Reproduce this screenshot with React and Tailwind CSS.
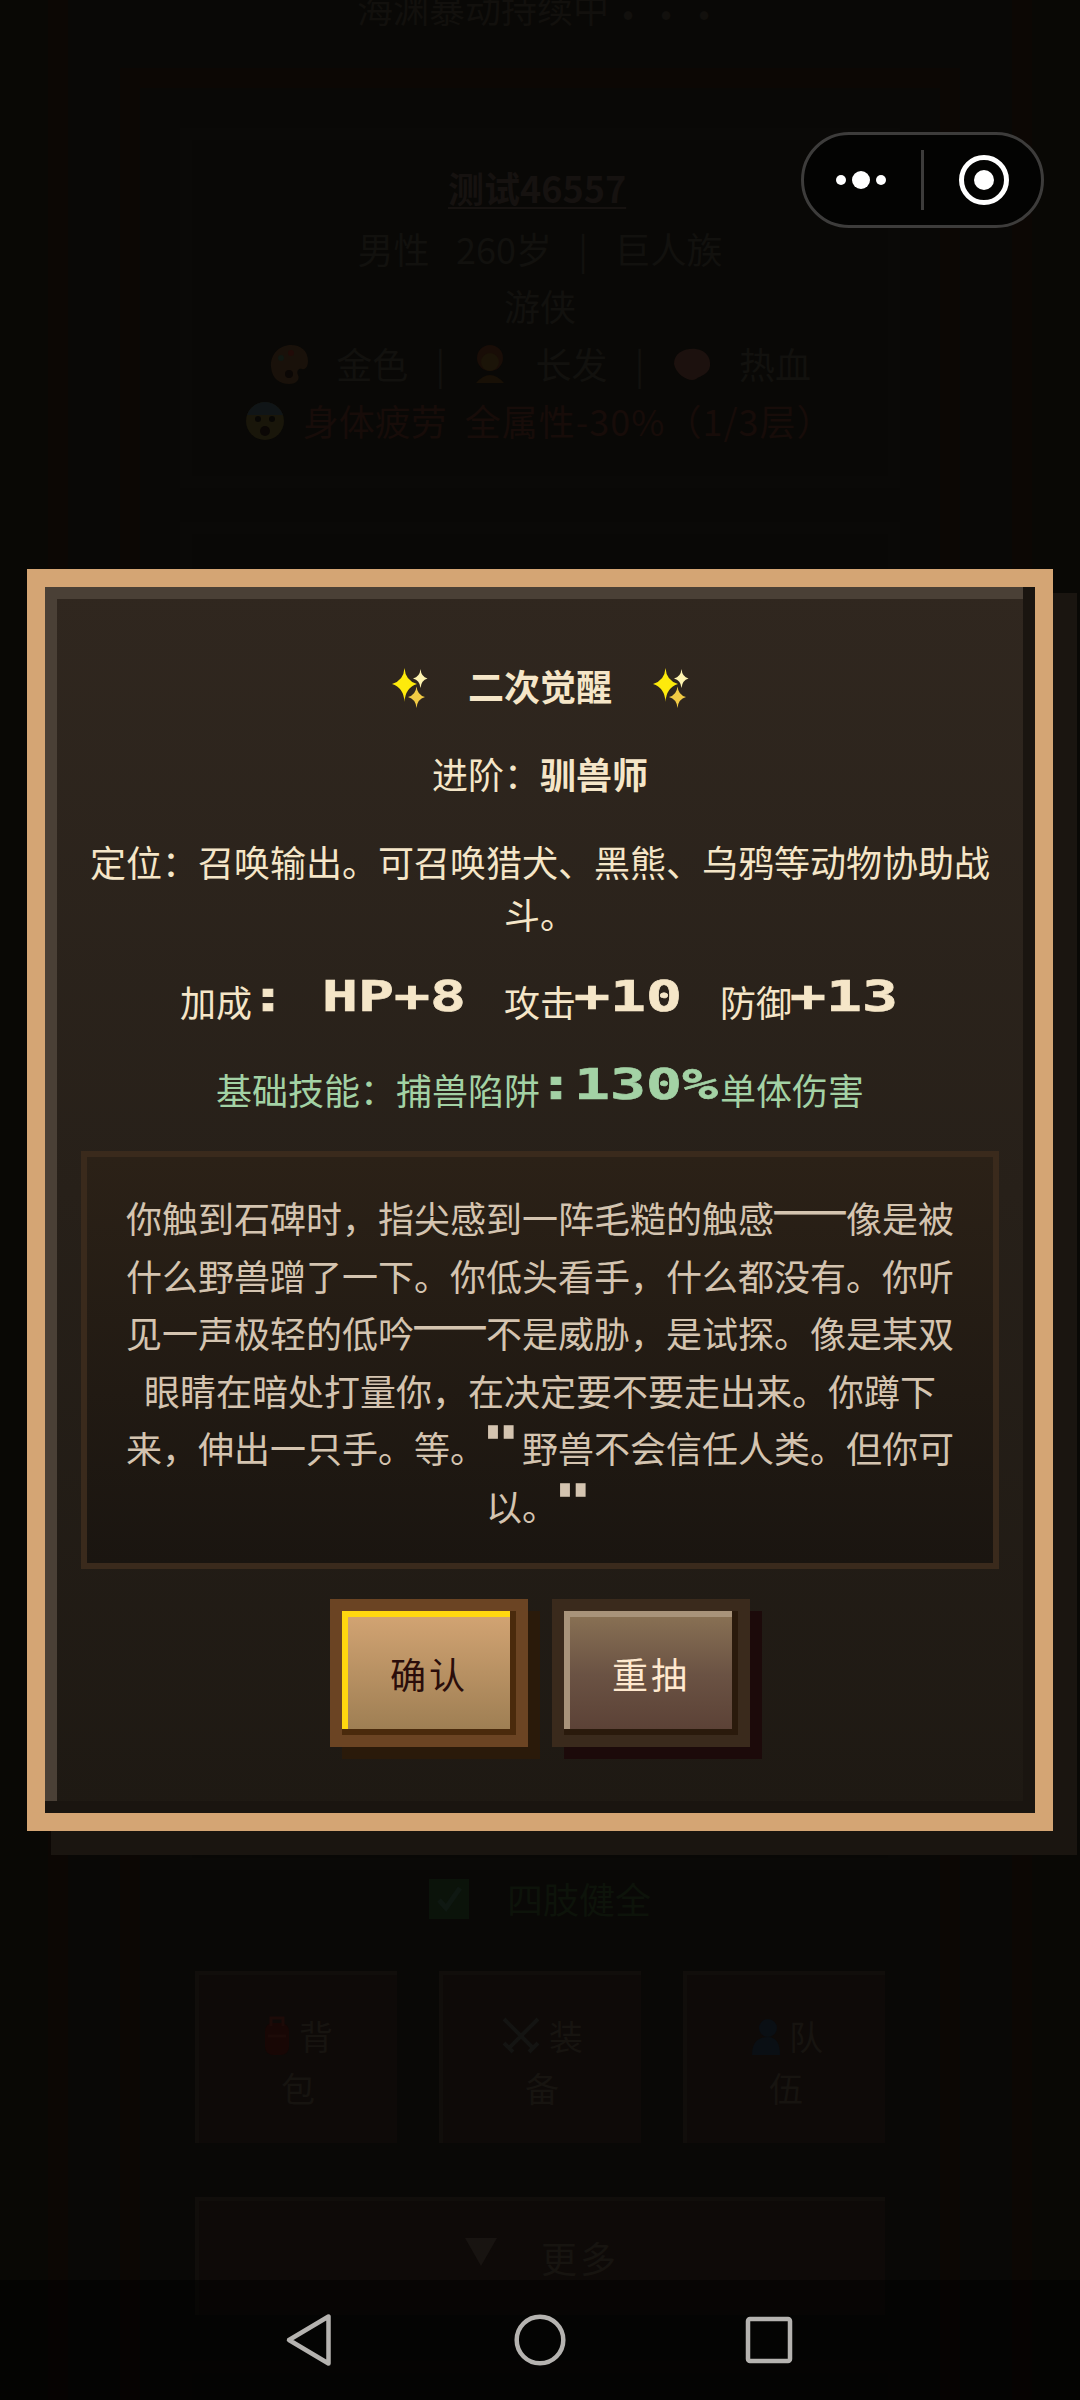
import React from "react";

function Sparkle() {
  return (
    <svg className="block h-[42px] w-[42px] overflow-visible" viewBox="0 0 42 42">
      <path d="M14.500 4Q15.300 16.500 27 20Q15.300 23.500 14.500 38Q13.700 23.500 2 20Q13.700 16.500 14.500 4Z" fill="#fdea0c" />
      <circle cx="14.500" cy="20" r="4.800" fill="#fdea0c" />
      <path d="M30.500 5Q31.200 12.800 37.500 14.500Q31.200 16.200 30.500 24Q29.800 16.200 23 14.500Q29.800 12.800 30.500 5Z" fill="#fdf3b0" />
      <circle cx="30.500" cy="14.500" r="2.300" fill="#fdf3b0" />
      <path d="M26.500 22.500Q27.300 31 35 33Q27.300 35 26.500 44Q25.700 35 18 33Q25.700 31 26.500 22.500Z" fill="#f2cb45" />
      <circle cx="26.500" cy="33" r="3" fill="#f2cb45" />
    </svg>
  );
}

function Pixel({ children, cells }) {
  return (
    <span className="relative -top-[6px] inline-block h-[52px] text-left align-top leading-[52px]" style={{ width: cells * 36 }}>
      <span className="-ml-[2px] inline-block origin-left scale-x-[1.424] font-['DejaVu_Sans_Mono','Liberation_Mono',monospace] text-[42px] leading-[52px] font-bold whitespace-pre [-webkit-text-stroke:0.6px_currentColor]">
        {children}
      </span>
    </span>
  );
}

function Quote() {
  return (
    <span className="relative -top-[2px] inline-block h-[52px] w-9 text-left align-top leading-[52px]">
      <span className="-ml-[4px] inline-block origin-left scale-x-[1.424] font-['DejaVu_Sans_Mono','Liberation_Mono',monospace] text-[44px] leading-[52px] font-bold [-webkit-text-stroke:1.4px_currentColor]">"</span>
    </span>
  );
}

function Dash() {
  return <span className="relative -top-[10px] inline-block w-[72px] scale-x-[1.24] font-bold">——</span>;
}

function Line({ children }) {
  return <span className="block h-[57.6px]">{children}</span>;
}

function Tile({ icon, a, b }) {
  return (
    <div className="flex h-[172px] w-[202px] flex-col items-center border-t-[4px] border-l-[4px] border-[#110e0b] bg-[#0e0a08] pt-[35px] text-[34px] leading-[52px] text-[#171410]">
      <div className="flex items-center gap-2">{icon}<span>{a}</span></div>
      <div>{b}</div>
    </div>
  );
}

function Backdrop() {
  return (
    <div className="flex h-[2400px] w-[1080px] flex-col overflow-hidden bg-[#090805]">
      <div className="mx-[48px] flex h-[2400px] flex-col items-center border-x-[20px] border-[#0c0704] bg-[#090806]">
        <div className="-mt-[22px] flex h-[90px] shrink-0 pl-3 text-[36px] leading-[58px] text-[#12100d]">
          海渊暴动持续中<span className="relative -top-[5px] pl-3 text-[40px] font-black tracking-[24px]">...</span>
        </div>
        <div className="flex h-[2340px] w-[840px] shrink-0 flex-col items-center border-[20px] border-b-0 border-[#0c0704] bg-[#090806] pt-[40px] text-[36px] leading-[57.6px] text-[#12110e]">
          <div className="flex h-[360px] w-[720px] shrink-0 flex-col items-center border-[12px] border-[#0a0907] pt-[19px]">
            <div className="w-[184px] font-bold whitespace-nowrap text-[#161210] underline decoration-2 underline-offset-4">测试46557</div>
            <div className="mt-[3px] flex w-[365px] justify-between"><span>男性</span><span>260岁</span><span>|</span><span>巨人族</span></div>
            <div>游侠</div>
            <div className="flex w-[542px] items-center justify-between">
              <svg className="h-10 w-10" viewBox="0 0 40 40"><path d="M22 1C10 1 1 11 2 23s9 17 18 17c8 0 11-5 9-9s1-7 4-6 6-2 6-8C39 7 32 1 22 1Z" fill="#19110a" /><circle cx="12" cy="14" r="3" fill="#101812" /><circle cx="22" cy="9" r="3" fill="#210b08" /><circle cx="20" cy="30" r="4" fill="#0b0705" /></svg>
              <span>金色</span><span>|</span>
              <svg className="h-10 w-9" viewBox="0 0 36 40"><circle cx="18" cy="14" r="13" fill="#190d07" /><circle cx="18" cy="18" r="9" fill="#1b1408" /><path d="M4 39q14-16 28 0Z" fill="#181006" /></svg>
              <span>长发</span><span>|</span>
              <svg className="h-10 w-10" viewBox="0 0 40 40"><path d="M2 20C2 8 14 4 24 5s15 9 14 17-8 9-14 13-20-4-22-15Z" fill="#1c110e" /></svg>
              <span>热血</span>
            </div>
            <div className="ml-[-2px] flex w-[589px] items-center justify-between whitespace-nowrap text-[#170c09]">
              <svg className="h-10 w-10" viewBox="0 0 40 40"><circle cx="20" cy="20" r="19" fill="#19160a" /><path d="M2 14a19 19 0 0 1 36 0Z" fill="#101517" /><circle cx="13" cy="18" r="3" fill="#080705" /><circle cx="27" cy="18" r="3" fill="#080705" /><ellipse cx="20" cy="30" rx="5" ry="5" fill="#0b0705" /></svg>
              <span>身体疲劳</span><span className="tracking-[1px]">全属性-30%（1/3层）</span>
            </div>
          </div>
          <div className="mt-[34px] h-[1348px] w-[720px] shrink-0 border-[12px] border-[#0a0907]" />
          <div className="flex h-[75px] w-[720px] shrink-0 items-start justify-center gap-[38px] text-[#0d130a]">
            <svg className="mt-[9px] h-10 w-10" viewBox="0 0 40 40"><rect width="40" height="40" fill="#0b130a" /><path d="m10 21 7 8L31 9" fill="none" stroke="#0f1812" strokeWidth="5" /></svg>
            <span>四肢健全</span>
          </div>
          <div className="flex h-[252px] w-[690px] shrink-0 justify-between pt-[26px]">
            <Tile a="背" b="包" icon={<svg className="h-10 w-7" viewBox="0 0 28 40"><rect x="2" y="7" width="24" height="32" rx="8" fill="#180705" /><path d="M8 10V2h12v8M5 20h18" stroke="#1d0b08" strokeWidth="3" fill="none" /></svg>} />
            <Tile a="装" b="备" icon={<svg className="h-10 w-10" viewBox="0 0 40 40"><path d="m3 3 30 30M37 3 7 33M3 27l9 9M37 27l-9 9" stroke="#141412" strokeWidth="4" /></svg>} />
            <Tile a="队" b="伍" icon={<svg className="h-10 w-8" viewBox="0 0 32 40"><circle cx="19" cy="12" r="9" fill="#0a0f14" /><path d="M3 39q0-18 16-18 12 0 12 18Z" fill="#0a0f14" /></svg>} />
          </div>
          <div className="flex h-[118px] w-[690px] shrink-0 items-center justify-center gap-11 border-t-[4px] border-l-[4px] border-[#110e0b] bg-[#0e0a08] text-[#171410]">
            <span className="-mt-3 h-0 w-0 border-x-[16px] border-t-[28px] border-x-transparent border-t-[#181411]" />
            <span className="tracking-[3px]">更多</span>
          </div>
          <div className="mt-[46px] h-[100px] w-[720px] shrink-0 border-[12px] border-[#0a0907]" />
        </div>
      </div>
    </div>
  );
}

export default function App() {
  return (
    <main className="relative h-[2400px] w-[1080px] overflow-hidden bg-[#090805] font-['Noto_Sans_CJK_SC',sans-serif]">
      <Backdrop />

      <div className="absolute top-[132px] left-[801px] flex h-[96px] w-[243px] items-center rounded-full border-[3px] border-[#3d3c3b] bg-[#030302]">
        <svg className="ml-[30px] h-5 w-[54px]" viewBox="0 0 54 20" fill="#fff"><circle cx="7" cy="10" r="5" /><circle cx="27" cy="10" r="9" /><circle cx="47" cy="10" r="5" /></svg>
        <span className="ml-[33px] h-[60px] w-[3px] bg-[#3d3c3b]" />
        <svg className="ml-[34px] h-[52px] w-[52px]" viewBox="0 0 52 52"><circle cx="26" cy="26" r="22.500" fill="none" stroke="#fff" strokeWidth="5" /><circle cx="26" cy="26" r="10" fill="#fff" /></svg>
      </div>

      <section className="absolute top-[569px] left-[27px] flex h-[1262px] w-[1026px] flex-col border-[18px] border-[#d4a574] bg-linear-to-b from-[#30271f] to-[#1e1913] px-9 pt-[72px] text-center text-[36px] leading-[52px] text-[#f5e6c8] shadow-[24px_24px_0_#1a1510,inset_-12px_-12px_0_#1a1510,inset_12px_12px_0_#4a4036]">
        <h1 className="flex h-[52px] items-center justify-center pl-[3px] font-bold">
          <Sparkle /><span className="mr-[39px] ml-9">二次觉醒</span><Sparkle />
        </h1>
        <p className="mt-9 h-[52px]">进阶：<b className="font-bold">驯兽师</b></p>
        <p className="mt-9 h-[104px]">定位：召唤输出。可召唤猎犬、黑熊、乌鸦等动物协助战<br />斗。</p>
        <p className="mt-9 flex h-[52px] justify-center whitespace-nowrap">
          加成<Pixel cells={2}>:</Pixel><Pixel cells={5}>HP+8</Pixel>攻击<Pixel cells={4}>+10</Pixel>防御<Pixel cells={3}>+13</Pixel>
        </p>
        <p className="mt-9 flex h-[52px] justify-center whitespace-nowrap text-[#a3d2a5]">
          基础技能：捕兽陷阱<Pixel cells={5}>:130%</Pixel>单体伤害
        </p>
        <div className="mt-9 h-[418px] w-[918px] shrink-0 border-[6px] border-[#3a2a1c] bg-linear-to-b from-[#2b2117] to-[#1a1510] pt-[32px] leading-[57.6px] whitespace-nowrap text-[#d4c4b0]">
          <Line>你触到石碑时，指尖感到一阵毛糙的触感<Dash />像是被</Line>
          <Line>什么野兽蹭了一下。你低头看手，什么都没有。你听</Line>
          <Line>见一声极轻的低吟<Dash />不是威胁，是试探。像是某双</Line>
          <Line>眼睛在暗处打量你，在决定要不要走出来。你蹲下</Line>
          <Line>来，伸出一只手。等。<Quote />野兽不会信任人类。但你可</Line>
          <Line>以。<Quote /></Line>
        </div>
        <div className="mt-[30px] flex justify-center gap-6">
          <button className="h-[148px] w-[198px] border-[12px] border-[#6b4423] bg-linear-to-b from-[#d4a574] to-[#9c7d52] tracking-[3px] text-[#2a0d0a] shadow-[12px_12px_0_#2a1a0a,inset_-6px_-6px_0_#4a2a0c,inset_6px_6px_0_#ffd70f]">确认</button>
          <button className="h-[148px] w-[198px] border-[12px] border-[#3a2a1c] bg-linear-to-b from-[#8b7355] via-[#6b5344] to-[#5a4035] tracking-[3px] text-[#ffe9cf] shadow-[12px_12px_0_#1c0a0a,inset_-6px_-6px_0_#2a1a0c,inset_6px_6px_0_#a8937a]">重抽</button>
        </div>
      </section>

      <nav className="absolute top-[2280px] left-0 flex h-[120px] w-[1080px] items-center bg-black/50">
        <svg className="ml-[283px] h-[56px] w-[52px]" viewBox="0 0 52 56" fill="none" stroke="#b5b3b0" strokeWidth="4.500" strokeLinejoin="round"><path d="M45.500 4.500v47L6 28Z" /></svg>
        <svg className="ml-[177px] h-[56px] w-[56px]" viewBox="0 0 56 56" fill="none" stroke="#b5b3b0" strokeWidth="4.500"><circle cx="28" cy="28" r="23.300" /></svg>
        <svg className="ml-[173px] h-[56px] w-[56px]" viewBox="0 0 56 56" fill="none" stroke="#b5b3b0" strokeWidth="4.500"><rect x="7" y="7" width="42" height="42" rx="2" /></svg>
      </nav>
    </main>
  );
}
